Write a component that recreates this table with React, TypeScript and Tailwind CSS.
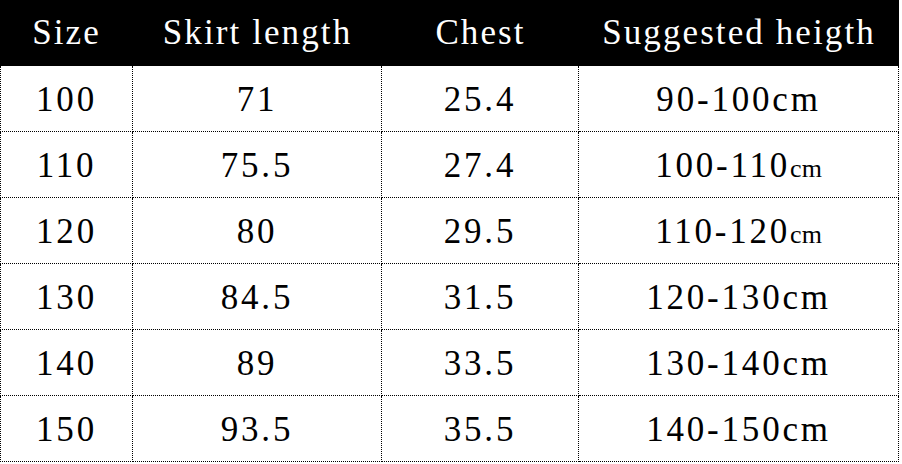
const headers = ['Size', 'Skirt length', 'Chest', 'Suggested heigth'];

const rows = [
  { size: '100', length: '71', chest: '25.4', range: '90-100', smallCm: false },
  { size: '110', length: '75.5', chest: '27.4', range: '100-110', smallCm: true },
  { size: '120', length: '80', chest: '29.5', range: '110-120', smallCm: true },
  { size: '130', length: '84.5', chest: '31.5', range: '120-130', smallCm: false },
  { size: '140', length: '89', chest: '33.5', range: '130-140', smallCm: false },
  { size: '150', length: '93.5', chest: '35.5', range: '140-150', smallCm: false },
];

const cols = 'grid grid-cols-[133px_249px_197px_320px]';
const cell = 'flex items-center justify-center pt-[3px] border-r border-b border-dotted border-black';

export default function App() {
  return (
    <div className="w-[902px] h-[464px] bg-white font-['Liberation_Serif',serif] text-black">
      <div className={`${cols} h-[66px] w-[899px] bg-black text-white text-[35px] tracking-[0.06em]`}>
        {headers.map((h) => (
          <div key={h} className="flex items-center justify-center pt-[1px]">
            {h}
          </div>
        ))}
      </div>
      <div className="w-[899px] text-[35px] tracking-[0.08em]">
        {rows.map((r) => (
          <div key={r.size} className={`${cols} h-[66px]`}>
            <div className={`${cell} border-l`}>{r.size}</div>
            <div className={cell}>{r.length}</div>
            <div className={cell}>{r.chest}</div>
            <div className={cell}>
              <span>
                {r.range}
                <span className={r.smallCm ? 'text-[26px] tracking-normal' : ''}>cm</span>
              </span>
            </div>
          </div>
        ))}
      </div>
    </div>
  );
}
